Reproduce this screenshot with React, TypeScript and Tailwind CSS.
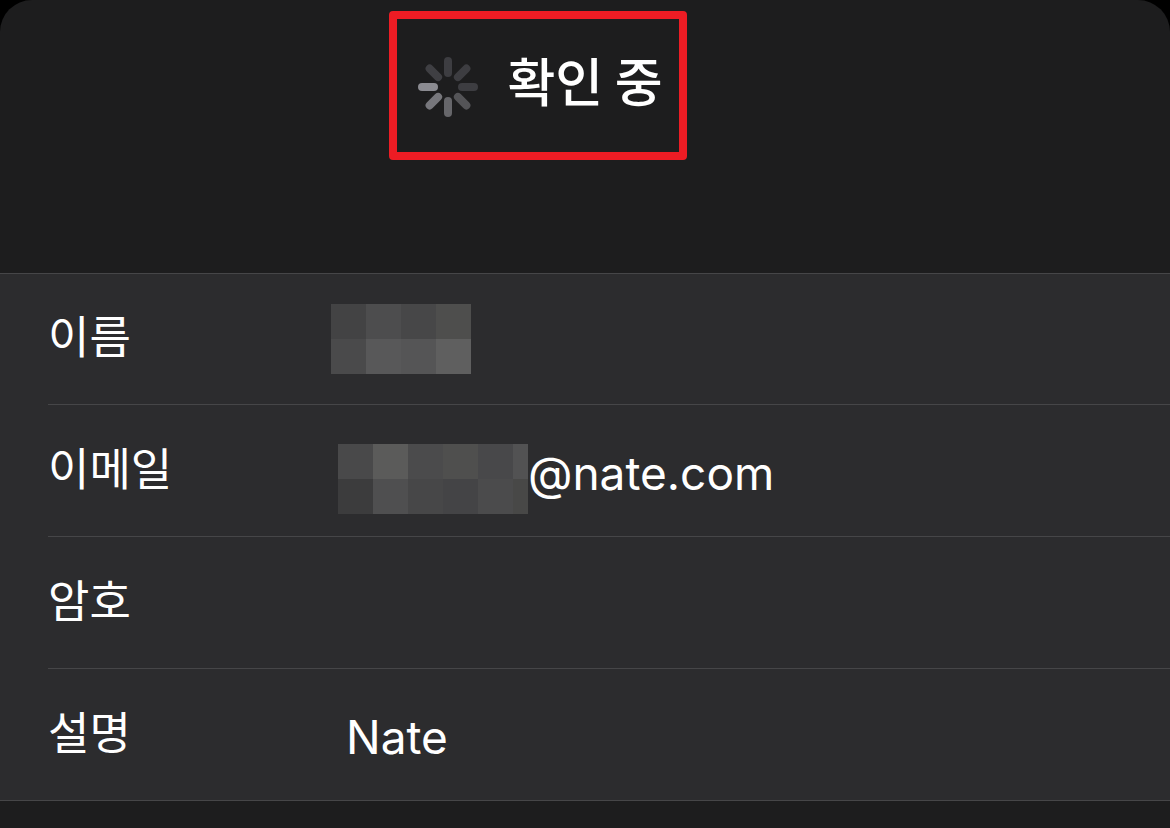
import type { ReactNode } from 'react';

const SPOKES = [
  { angle: 0, color: '#3d3d41' },
  { angle: 45, color: '#3d3d41' },
  { angle: 90, color: '#3d3d41' },
  { angle: 135, color: '#545457' },
  { angle: 180, color: '#66666a' },
  { angle: 225, color: '#77777c' },
  { angle: 270, color: '#8b8b91' },
  { angle: 315, color: '#3f3f43' },
];

function Spinner() {
  return (
    <svg viewBox="0 0 60 60" className="mt-0.5 size-[60px] shrink-0" aria-hidden="true">
      {SPOKES.map(({ angle, color }) => (
        <rect
          key={angle}
          x="26"
          y="0"
          width="8"
          height="20"
          rx="4"
          fill={color}
          transform={`rotate(${angle} 30 30)`}
        />
      ))}
    </svg>
  );
}

function NameMosaic() {
  return (
    <div className="mb-1 grid shrink-0 grid-cols-[repeat(4,35px)] grid-rows-[repeat(2,35px)]" aria-hidden="true">
      <span className="bg-[#434344]" />
      <span className="bg-[#4d4d4e]" />
      <span className="bg-[#474748]" />
      <span className="bg-[#4e4e4d]" />
      <span className="bg-[#4a4a4b]" />
      <span className="bg-[#585859]" />
      <span className="bg-[#555556]" />
      <span className="bg-[#5f5f5f]" />
    </div>
  );
}

function EmailMosaic() {
  return (
    <div className="mt-3 ml-[7px] grid shrink-0 grid-cols-[repeat(5,35px)_15px] grid-rows-[repeat(2,35px)]" aria-hidden="true">
      <span className="bg-[#49494a]" />
      <span className="bg-[#5b5b5a]" />
      <span className="bg-[#4b4b4c]" />
      <span className="bg-[#4f4f4e]" />
      <span className="bg-[#48484a]" />
      <span className="bg-[#525253]" />
      <span className="bg-[#3c3c3d]" />
      <span className="bg-[#4f4f50]" />
      <span className="bg-[#474748]" />
      <span className="bg-[#444446]" />
      <span className="bg-[#4b4b4c]" />
      <span className="bg-[#484847]" />
    </div>
  );
}

type FieldProps = {
  id: string;
  label: string;
  type?: string;
  value?: string;
  children?: ReactNode;
};

function Field({ id, label, type = 'text', value = '', children }: FieldProps) {
  return (
    <div className="flex h-[132px] items-center border-b border-[#464648] first:h-[131px] last:h-[131px] last:border-b-0">
      <label
        htmlFor={id}
        className="w-[283px] shrink-0 pb-2 text-[45px] leading-[66px] font-normal"
      >
        {label}
      </label>
      <div className="flex min-w-0 flex-1 items-center pt-1">
        {children}
        <input
          id={id}
          type={type}
          defaultValue={value}
          className={`min-w-0 flex-1 bg-transparent font-['Inter','Noto_Sans_CJK_KR',sans-serif] text-[46px] leading-[60px] outline-none ${children ? 'pl-0' : 'pl-[15px]'}`}
        />
      </div>
    </div>
  );
}

export default function App() {
  return (
    <div className="min-h-screen bg-black font-['Noto_Sans_CJK_KR',sans-serif] text-white">
      <main className="min-h-screen rounded-t-[32px] bg-[#1d1d1e]">
        <header className="flex h-[273px] items-start justify-center pt-[11px] pr-[94px]">
          <div
            role="status"
            className="flex h-[149px] items-center gap-[29px] rounded-[4px] border-8 border-[#ed1c24] pr-4 pl-[21px]"
          >
            <Spinner />
            <h1 className="pb-3 text-[52px] leading-[72px] font-medium whitespace-nowrap">확인 중</h1>
          </div>
        </header>
        <form className="border-y border-[#464648] bg-[#2c2c2e] pl-12" onSubmit={(e) => e.preventDefault()}>
          <Field id="name" label="이름">
            <NameMosaic />
          </Field>
          <Field id="email" label="이메일" value="@nate.com">
            <EmailMosaic />
          </Field>
          <Field id="password" label="암호" type="password" />
          <Field id="description" label="설명" value="Nate" />
        </form>
      </main>
    </div>
  );
}
